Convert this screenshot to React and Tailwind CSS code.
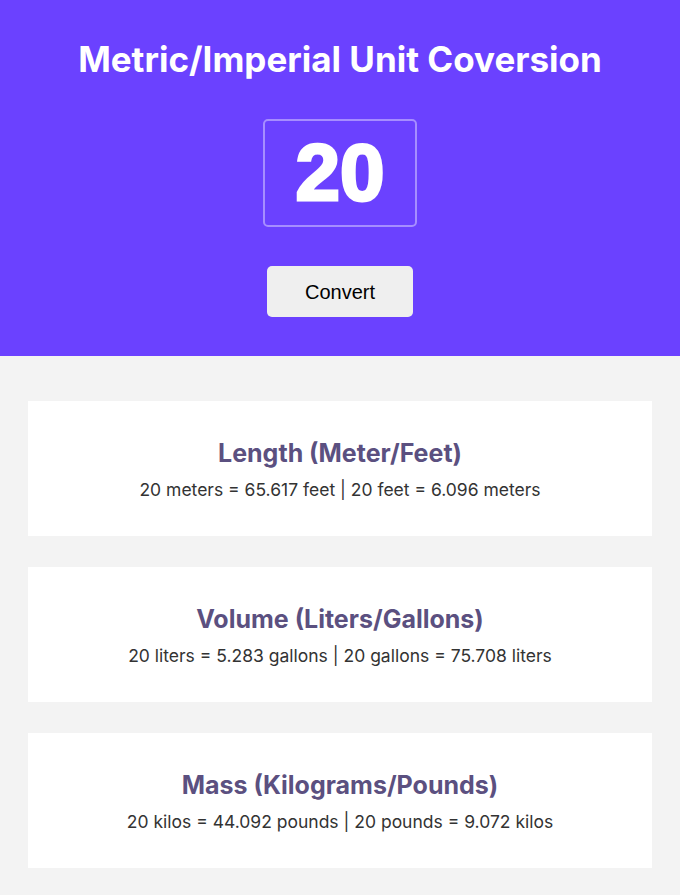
export default function App() {
  const cards = [
    { t: "Length (Meter/Feet)", a: "20 meters = 65.617 feet", b: "20 feet = 6.096 meters" },
    { t: "Volume (Liters/Gallons)", a: "20 liters = 5.283 gallons", b: "20 gallons = 75.708 liters" },
    { t: "Mass (Kilograms/Pounds)", a: "20 kilos = 44.092 pounds", b: "20 pounds = 9.072 kilos" },
  ];
  return (
    <div className="min-h-[895px] bg-[#f3f3f3]" style={{ fontFamily: "Inter, sans-serif" }}>
      <header className="bg-[#6b41ff] flex flex-col items-center pt-[37px] pb-[39px]">
        <h1 className="text-white text-[35px] leading-[44px] font-bold">Metric/Imperial Unit Coversion</h1>
        <div className="mt-[38px] w-[154px] h-[108px] border-2 border-white/40 rounded-[5px] flex items-center justify-center">
          <span className="text-white text-[80px] font-bold leading-none [-webkit-text-stroke:3px_white]" style={{ fontFamily: '"Liberation Sans", Arial, sans-serif' }}>20</span>
        </div>
        <button className="mt-[39px] w-[146px] h-[51px] bg-[#efefef] rounded-[5px] text-black text-[20px]" style={{ fontFamily: '"Liberation Sans", Arial, sans-serif' }}>Convert</button>
      </header>
      <main className="px-[28px] pt-[45px] pb-[27px] flex flex-col gap-[31px]">
        {cards.map((c) => (
          <div key={c.t} className="bg-white h-[135px] flex flex-col items-center justify-center pt-[3px]">
            <h2 className="text-[25px] leading-[30px] font-bold text-[#5b5080]">{c.t}</h2>
            <p className="mt-[10px] text-[17.5px] leading-[24px] text-[#333]">{c.a} | {c.b}</p>
          </div>
        ))}
      </main>
    </div>
  );
}
